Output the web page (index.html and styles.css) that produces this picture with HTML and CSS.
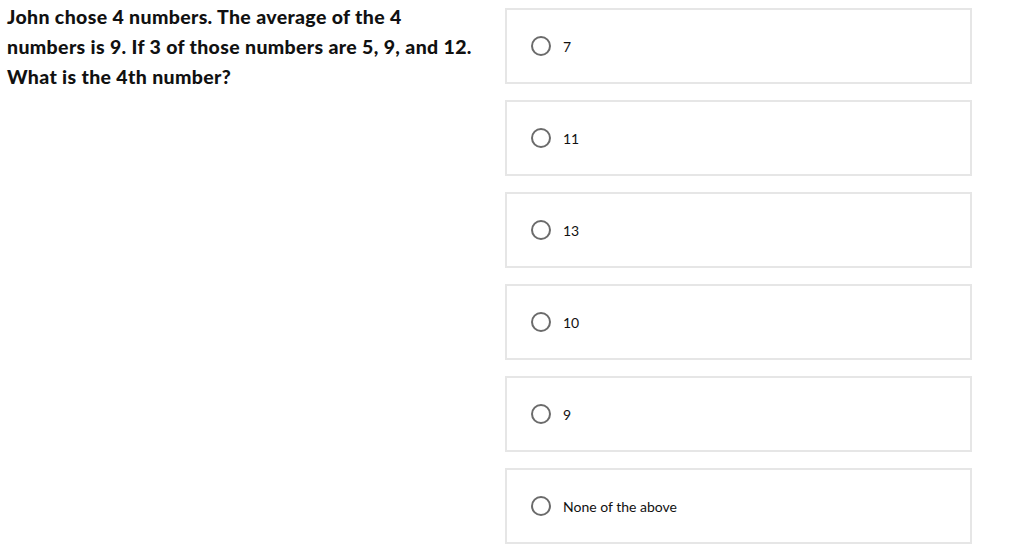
FILE: index.html
```html
<!DOCTYPE html>
<html lang="en">
<head>
  <meta charset="UTF-8">
  <title>Question</title>
  <link rel="stylesheet" href="styles.css">
</head>
<body>
  <div class="quiz">
    <div class="question">
      <p>John chose 4 numbers. The average of the 4 numbers is 9. If 3 of those numbers are 5, 9, and 12. What is the 4th number?</p>
    </div>
    <form class="options">
      <label class="option"><input type="radio" name="answer" value="7"><span>7</span></label>
      <label class="option"><input type="radio" name="answer" value="11"><span>11</span></label>
      <label class="option"><input type="radio" name="answer" value="13"><span>13</span></label>
      <label class="option"><input type="radio" name="answer" value="10"><span>10</span></label>
      <label class="option"><input type="radio" name="answer" value="9"><span>9</span></label>
      <label class="option"><input type="radio" name="answer" value="none"><span>None of the above</span></label>
    </form>
  </div>
</body>
</html>
```

FILE: styles.css
```css
body {
  font-family: Lato, "Noto Sans", sans-serif;
  background-color: #fff;
  color: #111;
  margin: 0;
  padding: 0;
}

.quiz {
  display: flex;
  padding: 8px 37px 0 7px;
}

.question {
  width: 498px;
  flex-shrink: 0;
}

.question p {
  margin: -6px 0 0;
  max-width: 472px;
  font-size: 19.5px;
  font-weight: 900;
  line-height: 30px;
  letter-spacing: 0.35px;
}

.options {
  flex: 1;
  display: flex;
  flex-direction: column;
  gap: 16px;
}

.option {
  display: flex;
  align-items: center;
  gap: 12px;
  height: 76px;
  box-sizing: border-box;
  padding-left: 24px;
  border: 2px solid #e6e6e6;
  font-size: 14px;
  color: #111;
  cursor: pointer;
}

.option input {
  appearance: none;
  margin: 0;
  width: 20px;
  height: 20px;
  border: 2px solid #6b6b6b;
  border-radius: 50%;
  box-sizing: border-box;
}

.option input:checked {
  background: radial-gradient(#6b6b6b 40%, transparent 45%);
}
```
